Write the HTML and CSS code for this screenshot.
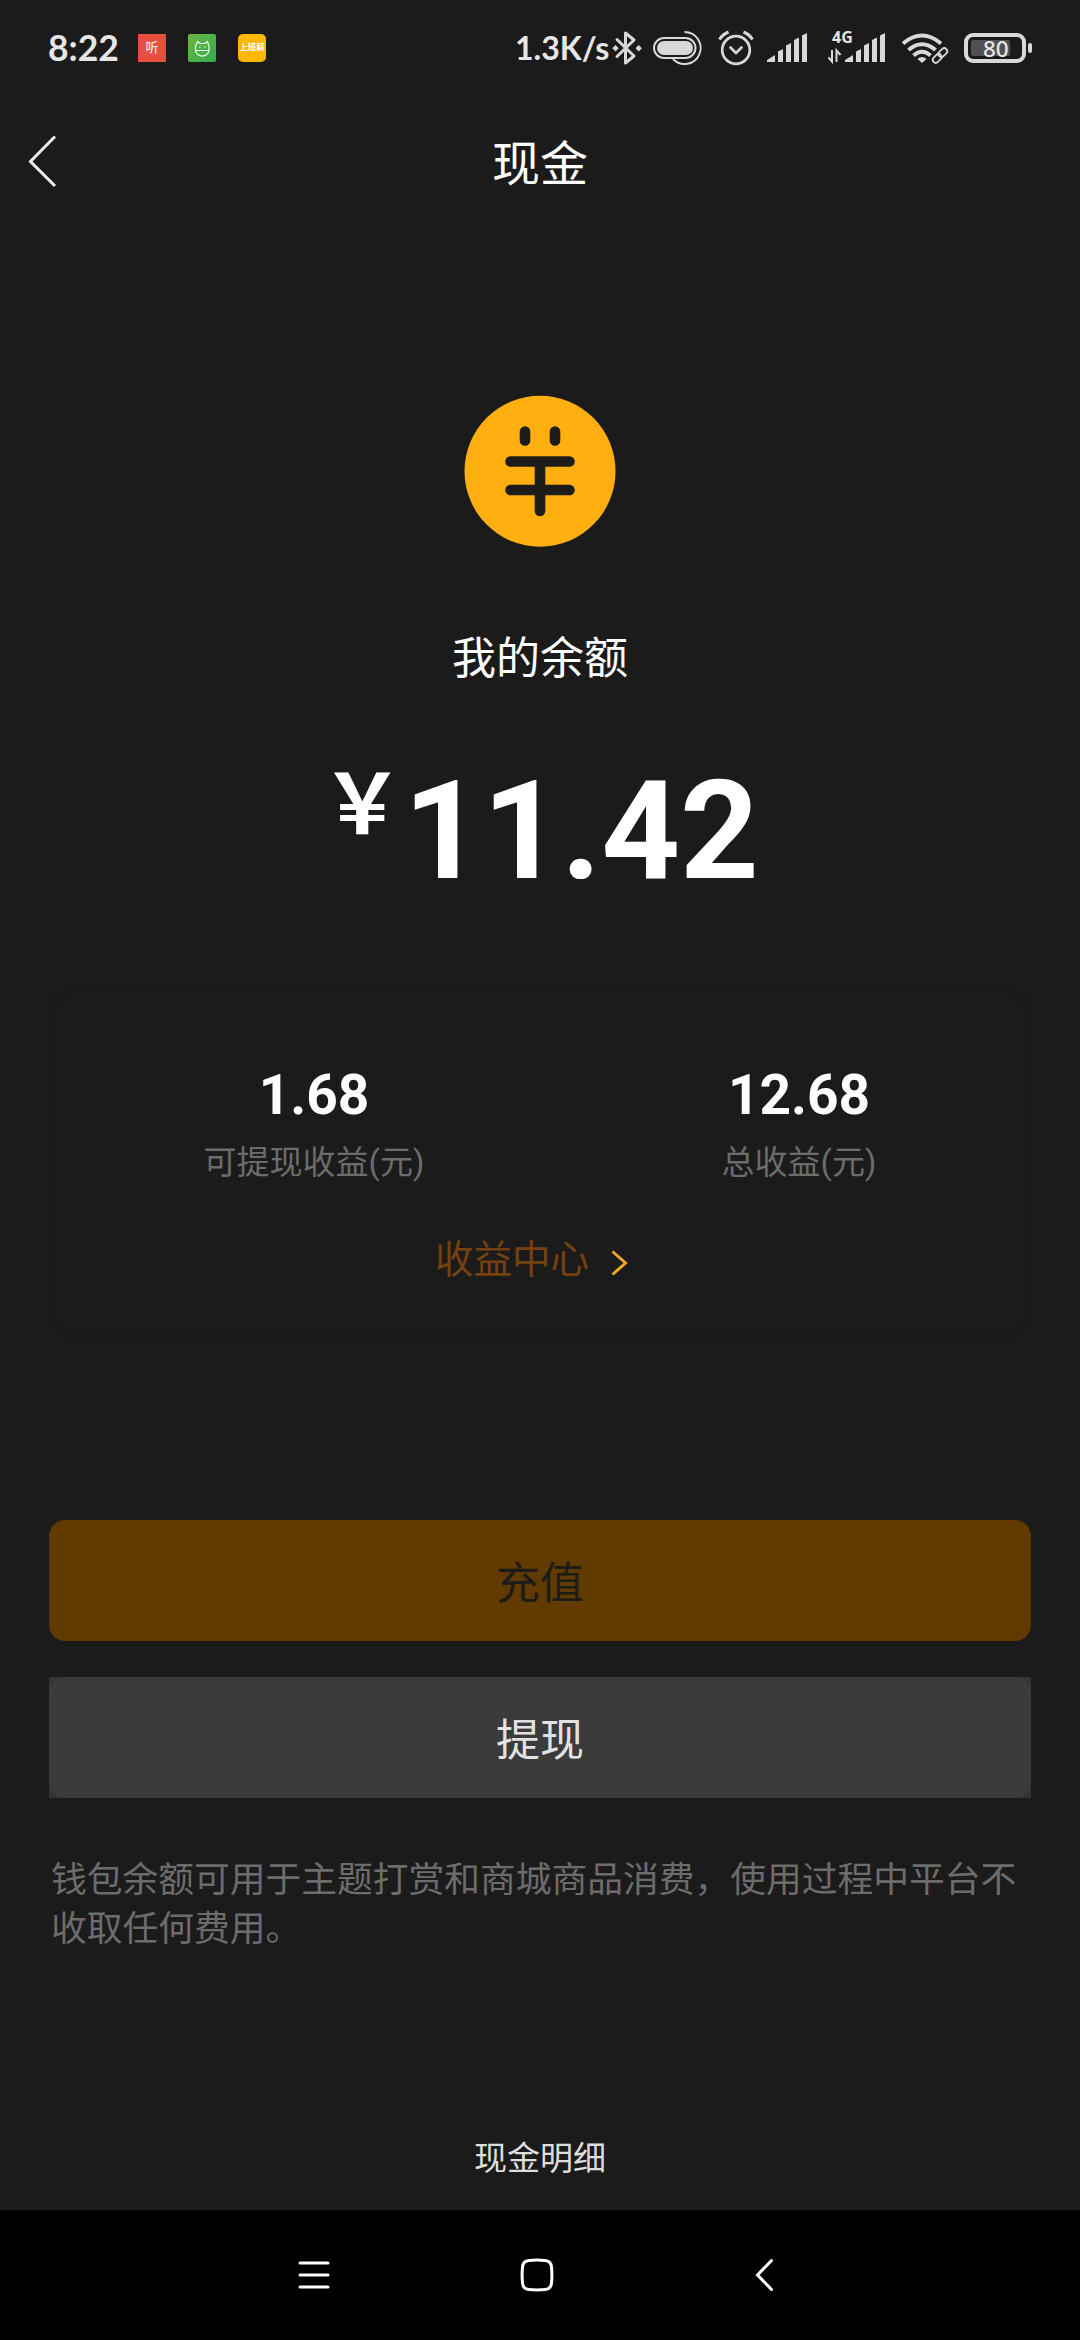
FILE: index.html
```html
<!DOCTYPE html>
<html lang="zh-CN">
<head>
<meta charset="utf-8">
<title>现金</title>
<link rel="stylesheet" href="styles.css">
</head>
<body>
<div class="screen">
  <div class="status">
    <span class="clock">8:22</span>
    <span class="app app-red">听</span>
    <svg class="app-green" width="28" height="28" viewBox="0 0 28 28" fill="none" stroke="#e8ffe8" stroke-width="1.2">
      <defs><linearGradient id="g" x1="0" y1="0" x2="1" y2="1"><stop offset="0" stop-color="#6db544"/><stop offset="1" stop-color="#32ab4b"/></linearGradient></defs>
      <rect width="28" height="28" rx="2" fill="url(#g)" stroke="none"/>
      <path d="M7.500 16.500V12.500L9.500 7.500l2.500 2h5L19.500 7.500l1.500 5v4a6.800 6.500 0 0 1-13.500 0zM7.500 16.500h13.500"/>
      <path d="M11 13h1.500M16 13h1.500"/>
    </svg>
    <span class="app app-yellow">上班薪</span>
    <span class="speed">1.3K/s</span>
    <svg class="icons" width="424" height="96" viewBox="612 0 424 96" fill="none" stroke="#d8d8d8">
      <path d="M617 39.500L634 56L625.500 63V33L634 40L617 56.500" stroke-width="3" stroke-linejoin="round" stroke-linecap="round"/>
      <path d="M615.500 45l3.200 3.200-3.200 3.200-3.200-3.200zM638.700 45l3.200 3.200-3.200 3.200-3.200-3.200z" fill="#d8d8d8" stroke="none"/>
      <rect x="654" y="38" width="41.500" height="20" rx="10" stroke-width="2"/>
      <rect x="657" y="41" width="36" height="14" rx="7" fill="#d8d8d8" stroke="none"/>
      <path d="M684.500 32a16 16 0 1 1-11.500 27" stroke-width="1.900"/>
      <circle cx="736" cy="50" r="13.800" stroke-width="2.700"/>
      <path d="M730.500 47.500l5.500 5.500 5.500-5.500" stroke-width="2.700" stroke-linecap="round" stroke-linejoin="round"/>
      <path d="M719.500 39.500q3-5 9-7.500M752.500 39.500q-3-5-9-7.500" stroke-width="3"/>
      <g id="signal" fill="#d8d8d8" stroke="none">
        <path d="M767 62v-2l8-5v7zM778 62V51.500l5-2.500v13zM786 62V45.500l5-2.500v19zM794 62V40l5-2.500v24.500zM802 62V35.500l5-2.500v29z"/>
      </g>
      <use href="#signal" x="78"/>
      <path d="M832 50v11.500l-3.500-4M836.500 62V50.500l4 4.500" stroke-width="2"/>
      <path d="M903 43.500q19-16 38 0M908.500 50q13.500-11.500 27 0M913.500 55.500q8.500-7.500 17 0" stroke-width="4"/>
      <path d="M922 63l-4.500-4q4.500-4 9 0z" fill="#d8d8d8" stroke="none"/>
      <g transform="rotate(-45 940 55.500)" stroke="#1b1b1b" stroke-width="5"><rect x="931" y="52" width="18" height="7" rx="3.500"/></g>
      <g transform="rotate(-45 940 55.500)" stroke-width="1.800"><rect x="931" y="52.500" width="10" height="6" rx="3"/><rect x="939" y="52.500" width="10" height="6" rx="3"/></g>
      <rect x="966" y="35" width="58" height="26" rx="7" stroke-width="4"/>
      <rect x="971" y="40" width="39" height="16" rx="2" fill="#505050" stroke="none"/>
      <rect x="1028" y="43" width="4" height="10" rx="2" fill="#d8d8d8" stroke="none"/>
      <text class="net" x="832" y="43">4G</text>
      <text class="batt" x="983" y="56.500">80</text>
    </svg>
  </div>

  <header class="header">
    <svg class="back" width="30" height="54" viewBox="28 134 30 54" fill="none" stroke="#ececec" stroke-width="3"><path d="M55 136.500L30.500 161.500L55 186"/></svg>
    <h1 class="title">现金</h1>
  </header>

  <main class="main">
    <svg class="coin" width="152" height="152" viewBox="464 395 152 152">
      <circle cx="540" cy="471.200" r="75.500" fill="#ffaf0f"/>
      <path d="M525 431.500v9M555 431.500v9M510.500 461.500h59M510.500 490h59M540 462v49" stroke="#1e1c18" stroke-width="10.600" stroke-linecap="round"/>
    </svg>
    <div class="label">我的余额</div>
    <div class="amount"><span class="yen">￥</span><span class="num">11.42</span></div>

    <section class="card">
      <div class="stats">
        <div class="stat"><b>1.68</b><span>可提现收益(元)</span></div>
        <div class="stat"><b>12.68</b><span>总收益(元)</span></div>
      </div>
      <div class="link">收益中心
        <svg width="18" height="28" viewBox="611 1249 18 28" fill="none" stroke="#eea626" stroke-width="3"><path d="M612.500 1251.500L625.500 1263L612.500 1274.500"/></svg>
      </div>
    </section>

    <div class="btn recharge">充值</div>
    <div class="btn-wrap"><div class="btn withdraw">提现</div></div>
    <p class="note">钱包余额可用于主题打赏和商城商品消费，使用过程中平台不收取任何费用。</p>
    <div class="detail">现金明细</div>
  </main>

  <nav class="nav">
    <svg width="32" height="40" viewBox="298 2273 32 40" stroke="#fff" stroke-width="3" stroke-linecap="round"><path d="M300 2281h28M300 2293h28M300 2305h28"/></svg>
    <svg width="34" height="40" viewBox="520 2255 34 40" fill="none" stroke="#fff" stroke-width="3"><path d="M529 2260.500q8-.8 16 0q6 .500 6.500 6.500q.8 8 0 16q-.500 6-6.500 6.500q-8 .8-16 0q-6-.500-6.500-6.500q-.8-8 0-16q.500-6 6.500-6.500z"/></svg>
    <svg width="20" height="40" viewBox="754 2255 20 40" fill="none" stroke="#fff" stroke-width="3" stroke-linecap="round"><path d="M771.500 2260.500L757.500 2275L771.500 2289.500"/></svg>
  </nav>
</div>
</body>
</html>
```
FILE: styles.css
```css
* { box-sizing: border-box; }
body { margin: 0; background: #1b1b1b; }
.screen {
  width: 1080px;
  height: 2340px;
  display: flex;
  flex-direction: column;
  background: #1b1b1b;
  color: #fff;
  font-family: Roboto, "Noto Sans CJK SC", sans-serif;
  overflow: hidden;
}
.status {
  height: 96px;
  display: flex;
  align-items: center;
  padding-left: 48px;
  white-space: nowrap;
  color: #e6e6e6;
}
.clock { width: 90px; font: bold 35.500px/44px Lato, sans-serif; }
.app {
  width: 28px;
  height: 28px;
  line-height: 27px;
  text-align: center;
  overflow: hidden;
  color: #fff;
}
.app-red { background: #e6503f; font-size: 13px; border-radius: 1px; margin-right: 22px; }
.app-green { margin-right: 22px; }
.app-yellow { background: #ffb800; font-size: 8.500px; font-weight: bold; border-radius: 5px; margin-right: 249px; }
.speed { width: 97px; font: bold 32px/44px Lato, sans-serif; }
.icons { flex: none; }
.net, .batt { fill: #e6e6e6; stroke: none; font-family: "Noto Sans", sans-serif; }
.net { font-size: 16px; font-weight: bold; }
.batt { font-size: 22.500px; font-weight: 500; }

.header {
  height: 132px;
  display: grid;
  grid-template-columns: 92px 1fr 92px;
  align-items: center;
}
.back { margin: -2px 0 0 28px; }
.title { margin: 6px 0 0; font-size: 48px; line-height: 60px; font-weight: 400; text-align: center; }

.main {
  flex: 1;
  display: flex;
  flex-direction: column;
  align-items: center;
}
.coin { margin-top: 167px; }
.label { margin-top: 79px; font-size: 44px; line-height: 66px; }
.amount { margin-top: 59px; height: 160px; display: flex; align-items: flex-start; font-weight: bold; }
.yen { font-size: 82.500px; line-height: 110px; }
.num { font-size: 137.500px; line-height: 161px; }

.card {
  margin-top: 74px;
  width: 990px;
  height: 356px;
  border: 10px solid #1a1a1a;
  border-radius: 32px;
  padding-top: 68px;
}
.stats { display: flex; justify-content: space-around; }
.stat { display: flex; flex-direction: column; align-items: center; }
.stat b { font-size: 55px; line-height: 64px; }
.stat span { margin-top: 12px; font-size: 33px; line-height: 48px; color: #6c6c6c; }
.link {
  margin: 45px 0 0 380px;
  display: flex;
  align-items: center;
  gap: 22px;
  font-size: 38.500px;
  line-height: 56px;
  color: #75410f;
}
.link svg { margin-top: 6px; }

.btn {
  width: 982px;
  height: 121px;
  border-radius: 16px;
  font-size: 44px;
  line-height: 129px;
  text-align: center;
}
.recharge { margin-top: 179px; background: #613a00; color: #1e1c18; }
.btn-wrap { margin-top: 36px; background: #333; }
.withdraw { background: #3b3b3b; color: #e2e2e2; }
.note {
  width: 982px;
  margin: 58px 0 0;
  padding: 0 2px;
  font-size: 35.750px;
  line-height: 49px;
  color: #6c6c6c;
}
.detail { margin-top: auto; margin-bottom: 27px; font-size: 33px; line-height: 48px; color: #dedede; }

.nav {
  height: 130px;
  background: #000;
  display: flex;
  align-items: center;
  padding-left: 298px;
}
.nav svg:nth-child(2) { margin-left: 190px; }
.nav svg:nth-child(3) { margin-left: 200px; }
```
